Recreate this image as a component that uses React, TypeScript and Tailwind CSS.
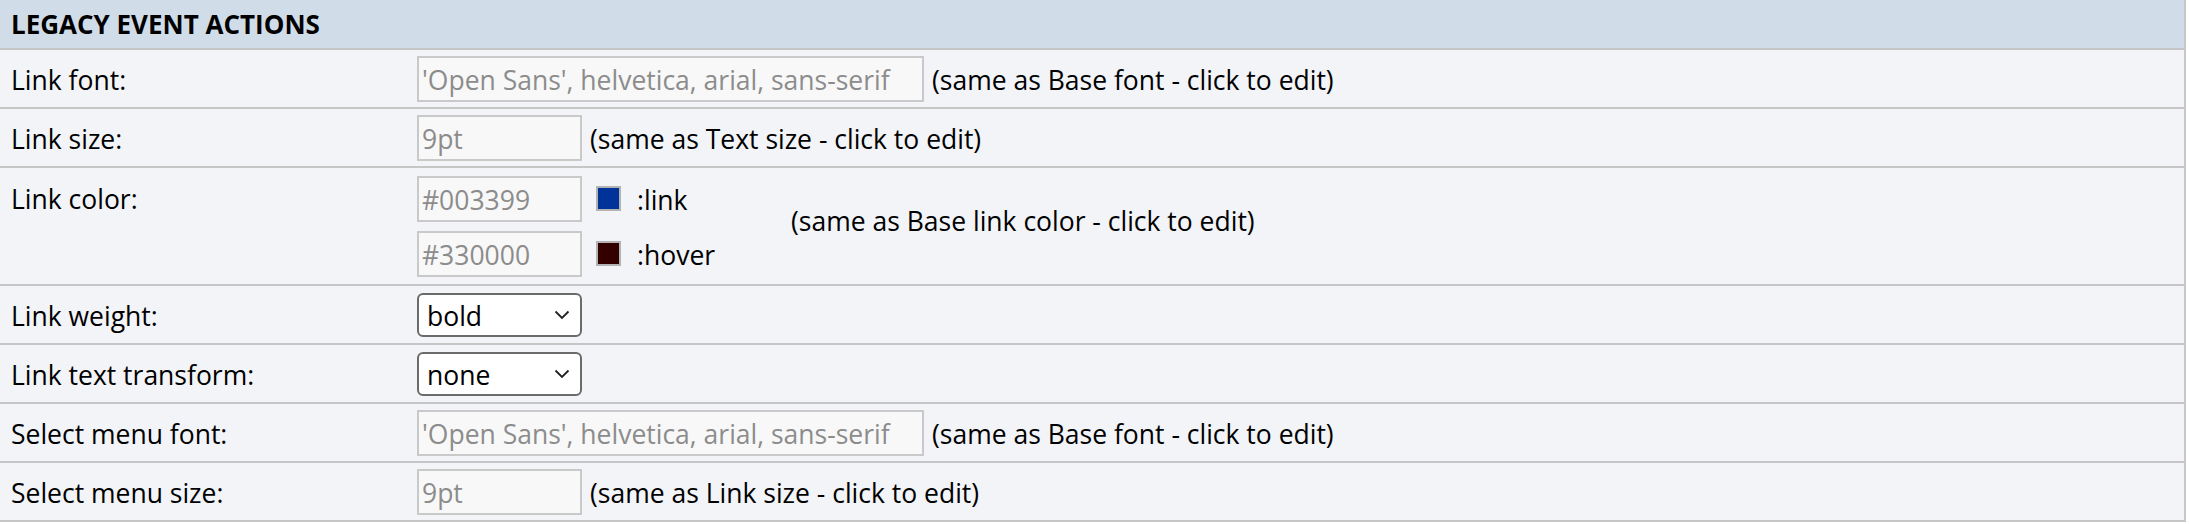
import React from "react";

const font = { fontFamily: "'Open Sans', 'Liberation Sans', sans-serif" };

function Input({ value, wide }: { value: string; wide?: boolean }) {
  return (
    <div
      className={`${wide ? "w-[507px]" : "w-[165px]"} h-[46px] border-2 border-[#c9c9c9] bg-[#f8f8f8] pl-[3px] pt-[5px] flex items-center text-[26.5px] text-[#8c8c8c] shrink-0 whitespace-nowrap overflow-hidden`}
    >
      {value}
    </div>
  );
}

function Select({ value }: { value: string }) {
  return (
    <div className="w-[165px] h-[44px] border-2 border-[#6b6b6b] rounded-[6px] bg-white pl-[8px] pr-[10px] flex items-center justify-between text-[26.5px] text-black shrink-0">
      <span className="pt-[5px]">{value}</span>
      <svg width="16" height="10" viewBox="0 0 16 10" fill="none">
        <path d="M1.5 1.5 L8 8 L14.5 1.5" stroke="#222" strokeWidth="1.8" />
      </svg>
    </div>
  );
}

function Note({ children }: { children: React.ReactNode }) {
  return <span className="text-[26.5px] text-black ml-[8px] pt-[5px] whitespace-nowrap">{children}</span>;
}

function Row({
  label,
  children,
  tall,
}: {
  label: string;
  children: React.ReactNode;
  tall?: boolean;
}) {
  return (
    <div
      className={`flex border-b-2 border-[#c6c6c6] bg-[#f2f4f8] ${tall ? "h-[118px]" : "h-[59px]"}`}
    >
      <div className={`w-[417px] shrink-0 pl-[11px] text-[26.5px] text-black flex ${tall ? "items-start pt-[12px]" : "items-center pt-[5px]"}`}>
        {label}
      </div>
      <div className="flex-1 flex items-center">{children}</div>
    </div>
  );
}

function Swatch({ color }: { color: string }) {
  return (
    <div className="w-[25px] h-[25px] border-2 border-[#b3b3b3] shrink-0" style={{ backgroundColor: color }} />
  );
}

export default function App() {
  return (
    <div className="w-[2186px] border-r-2 border-[#c6c6c6] bg-[#f2f4f8]" style={font}>
      <div className="h-[50px] bg-[#d0dde8] border-b-2 border-[#c6c6c6] flex items-center pl-[11px] text-[26px] font-bold text-black">
        LEGACY EVENT ACTIONS
      </div>
      <Row label="Link font:">
        <Input wide value="'Open Sans', helvetica, arial, sans-serif" />
        <Note>(same as Base font - click to edit)</Note>
      </Row>
      <Row label="Link size:">
        <Input value="9pt" />
        <Note>(same as Text size - click to edit)</Note>
      </Row>
      <Row label="Link color:" tall>
        <div className="flex flex-col gap-[9px]">
          <div className="flex items-center">
            <Input value="#003399" />
            <div className="ml-[14px]">
              <Swatch color="#003399" />
            </div>
            <span className="ml-[16px] pt-[5px] text-[26.5px] text-black w-[154px]">:link</span>
          </div>
          <div className="flex items-center">
            <Input value="#330000" />
            <div className="ml-[14px]">
              <Swatch color="#330000" />
            </div>
            <span className="ml-[16px] pt-[5px] text-[26.5px] text-black w-[154px]">:hover</span>
          </div>
        </div>
        <span className="text-[26.5px] pb-[9px] text-black whitespace-nowrap">(same as Base link color - click to edit)</span>
      </Row>
      <Row label="Link weight:">
        <Select value="bold" />
      </Row>
      <Row label="Link text transform:">
        <Select value="none" />
      </Row>
      <Row label="Select menu font:">
        <Input wide value="'Open Sans', helvetica, arial, sans-serif" />
        <Note>(same as Base font - click to edit)</Note>
      </Row>
      <Row label="Select menu size:">
        <Input value="9pt" />
        <Note>(same as Link size - click to edit)</Note>
      </Row>
    </div>
  );
}
